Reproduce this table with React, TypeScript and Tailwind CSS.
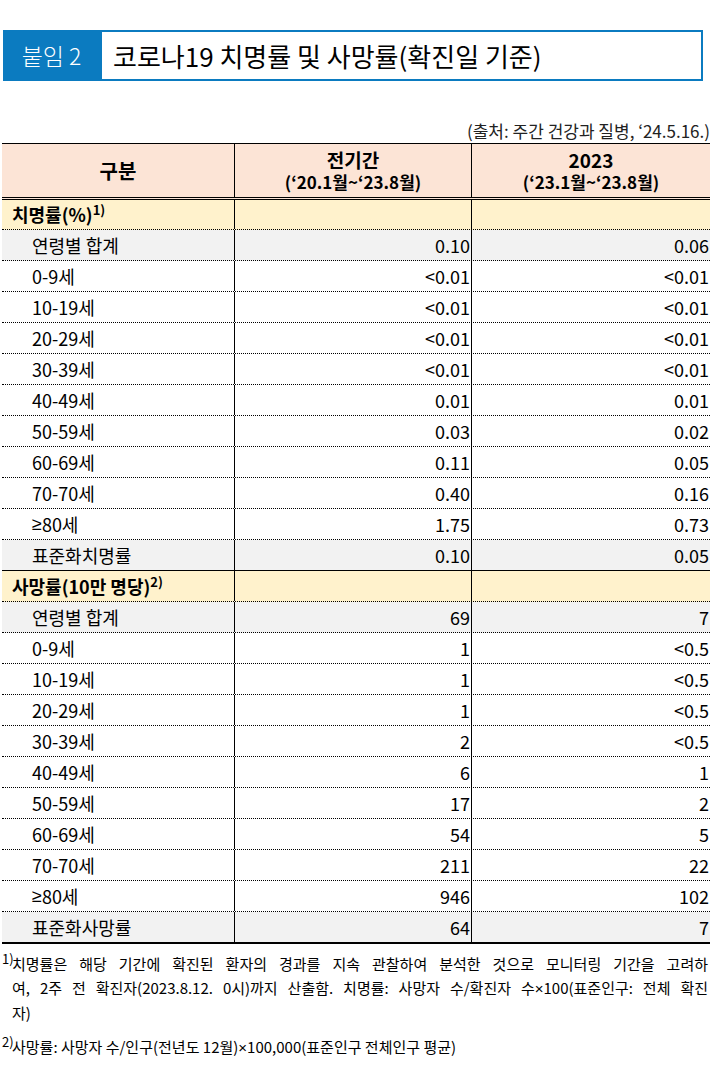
import clsx from "clsx";

type Tone = "plain" | "gray" | "cat";
type Edge = "dotted" | "solid" | "thick";

const AGES = ["0-9세", "10-19세", "20-29세", "30-39세", "40-49세", "50-59세", "60-69세", "70-70세", "≥80세"];

const FATAL = {
    total: ["0.10", "0.06"],
    ages: [
        ["<0.01", "<0.01"],
        ["<0.01", "<0.01"],
        ["<0.01", "<0.01"],
        ["<0.01", "<0.01"],
        ["0.01", "0.01"],
        ["0.03", "0.02"],
        ["0.11", "0.05"],
        ["0.40", "0.16"],
        ["1.75", "0.73"],
    ],
    std: ["0.10", "0.05"],
};

const DEATH = {
    total: ["69", "7"],
    ages: [
        ["1", "<0.5"],
        ["1", "<0.5"],
        ["1", "<0.5"],
        ["2", "<0.5"],
        ["6", "1"],
        ["17", "2"],
        ["54", "5"],
        ["211", "22"],
        ["946", "102"],
    ],
    std: ["64", "7"],
};

// the ≥ sign is full width in the CJK font, the reference shows a narrow one
function AgeLabel({ text }: { text: string }) {
    if (!text.startsWith("≥")) return <>{text}</>;
    return (
        <>
            <span className="font-['Liberation_Sans',sans-serif]">≥</span>
            {text.slice(1)}
        </>
    );
}

/**
 * TABLE ROW
 */
function Row({ label, values, tone = "plain", edge = "dotted", tall = "h-[31px]" }: {
    label: React.ReactNode; values: string[]; tone?: Tone; edge?: Edge; tall?: string
}) {
    return (
        <div
            className={clsx(
                "flex",
                tall,
                tone === "gray" && "bg-[#f2f2f2]",
                tone === "cat" && "bg-[#fff2cc]",
                tone === "plain" && "bg-white",
                edge === "dotted" && "border-b border-dotted border-black",
                edge === "solid" && "border-b border-solid border-black",
                edge === "thick" && "border-b-2 border-solid border-black",
            )}
        >
            <div className={clsx("w-[232px] flex items-center text-[18px]", tone === "cat" ? "pl-[10px] font-bold" : "pl-[30px]")}>
                {label}
            </div>
            <div className="w-[237px] border-l border-black flex items-center justify-end pr-[1px] text-[18px]">
                {values[0]}
            </div>
            <div className="w-[239px] border-l border-black flex items-center justify-end pr-[1px] text-[18px]">
                {values[1]}
            </div>
        </div>
    );
}

/**
 * ONE SECTION (치명률 / 사망률)
 */
function Section({ title, note, data, stdLabel, first, last }: {
    title: string; note: string; data: typeof FATAL; stdLabel: string; first?: boolean; last?: boolean
}) {
    return (
        <>
            <Row
                tone="cat"
                tall={first ? "h-[30px]" : "h-[31px]"}
                values={["", ""]}
                label={
                    <span>
                        {title}
                        <span className="inline-block text-[13px] leading-none relative -top-[7px]">{note}</span>
                    </span>
                }
            />
            <Row tone="gray" label="연령별 합계" values={data.total} />
            {AGES.map((age, idx) => (
                <Row key={age} label={<AgeLabel text={age} />} values={data.ages[idx]} />
            ))}
            <Row
                tone="gray"
                label={stdLabel}
                values={data.std}
                edge={last ? "thick" : "solid"}
                tall={last ? "h-[32px]" : "h-[31px]"}
            />
        </>
    );
}

export default function App() {
    const times = <span className="font-['Liberation_Sans',sans-serif]">×</span>;
    return (
        <div className="w-[715px] min-h-[1083px] bg-white text-black font-['Noto_Sans_CJK_KR',sans-serif] pt-[30px]">
            {/* title box */}
            <div className="ml-[3px] w-[700px] h-[51px] flex">
                <div className="w-[97px] bg-[#0b7bc0] text-white text-[23px] font-light flex items-center justify-center">
                    붙임 2
                </div>
                <div className="flex-1 border-2 border-[#0b7bc0] pl-[11px] flex items-center text-[26px]">
                    코로나19 치명률 및 사망률(확진일 기준)
                </div>
            </div>

            <p className="mt-[38px] mb-[1px] pr-[5px] text-right text-[17px] leading-[23px] text-[#222]">
                (출처: 주간 건강과 질병, ‘24.5.16.)
            </p>

            {/* table */}
            <div className="ml-[2px] w-[708px]">
                <div className="flex h-[57px] bg-[#fce4d6] border-t border-black border-b-[3px] border-double font-bold">
                    <div className="w-[232px] flex items-center justify-center text-[20px]">구분</div>
                    <div className="w-[237px] border-l border-black flex flex-col items-center justify-center">
                        <span className="text-[19px] leading-[23px]">전기간</span>
                        <span className="text-[17px] leading-[22px]">(‘20.1월~‘23.8월)</span>
                    </div>
                    <div className="w-[239px] border-l border-black flex flex-col items-center justify-center">
                        <span className="text-[19px] leading-[23px]">2023</span>
                        <span className="text-[17px] leading-[22px]">(‘23.1월~‘23.8월)</span>
                    </div>
                </div>

                <Section title="치명률(%)" note="1)" data={FATAL} stdLabel="표준화치명률" first />
                <Section title="사망률(10만 명당)" note="2)" data={DEATH} stdLabel="표준화사망률" last />
            </div>

            {/* footnotes */}
            <div className="mt-[8px] text-[15px] leading-[24px]">
                <div className="flex">
                    <span className="w-[12px] pl-[2px] text-[13px] leading-[14px]">1)</span>
                    <div className="w-[696px]">
                        <p className="text-justify [text-align-last:justify]">
                            치명률은 해당 기간에 확진된 환자의 경과를 지속 관찰하여 분석한 것으로 모니터링 기간을 고려하
                        </p>
                        <p className="text-justify [text-align-last:justify]">
                            여, 2주 전 확진자(2023.8.12. 0시)까지 산출함. 치명률: 사망자 수/확진자 수{times}100(표준인구: 전체 확진
                        </p>
                        <p>자)</p>
                    </div>
                </div>
                <div className="flex mt-[10px]">
                    <span className="w-[12px] pl-[2px] text-[13px] leading-[14px]">2)</span>
                    <p>사망률: 사망자 수/인구(전년도 12월){times}100,000(표준인구 전체인구 평균)</p>
                </div>
            </div>
        </div>
    );
}
